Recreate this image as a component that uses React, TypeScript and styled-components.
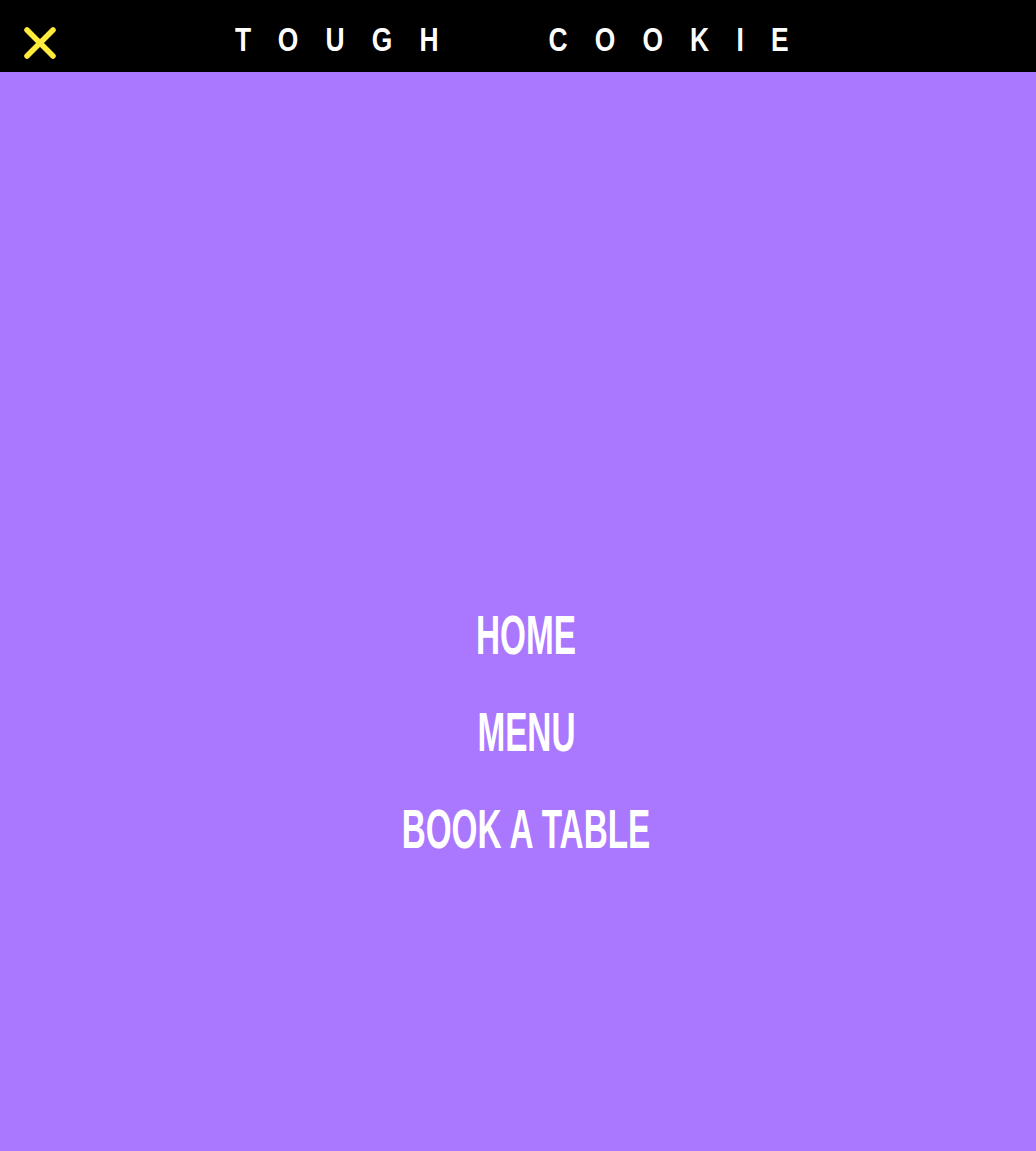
import styled, { createGlobalStyle } from "styled-components";

const PURPLE = "#aa77ff";
const YELLOW = "#ffeb3b";

const GlobalStyle = createGlobalStyle`
  html, body {
    margin: 0;
    padding: 0;
    background: ${PURPLE};
  }
  body {
    font-family: "Liberation Sans", Arial, sans-serif;
  }
`;

const Page = styled.div`
  min-height: 1151px;
  background: ${PURPLE};
  display: flex;
  flex-direction: column;
`;

const Header = styled.header`
  height: 72px;
  background: #000;
  display: flex;
  align-items: center;
  padding-left: 24px;
`;

const CloseButton = styled.button`
  flex: none;
  width: 32px;
  height: 32px;
  padding: 0;
  margin: 14px 0 0;
  border: none;
  background: none;
  cursor: pointer;
  display: flex;
  align-items: center;
  justify-content: center;

  svg {
    display: block;
  }
`;

const Title = styled.h1`
  margin: 7px 0 0 179px;
  color: #fff;
  font-size: 33px;
  font-weight: 700;
  letter-spacing: 34px;
  word-spacing: 60px;
  line-height: 1;
  white-space: nowrap;
  transform: scaleX(0.8);
  transform-origin: left center;
`;

const Nav = styled.nav`
  flex: 1;
  display: flex;
  flex-direction: column;
  align-items: center;
  padding-top: 514px;
  padding-left: 16px;
`;

const NavLink = styled.a`
  display: inline-block;
  color: #fff;
  text-decoration: none;
  font-size: 56px;
  font-weight: 700;
  line-height: 97px;
  transform: scaleX(0.595);
  cursor: pointer;
`;

const LINKS = ["HOME", "MENU", "BOOK A TABLE"];

function CloseIcon() {
  return (
    <svg width="32" height="32" viewBox="0 0 32 32">
      <path
        d="M3 3 L29 29 M29 3 L3 29"
        stroke={YELLOW}
        strokeWidth="5.5"
        strokeLinecap="round"
        fill="none"
      />
    </svg>
  );
}

export default function App() {
  return (
    <Page>
      <GlobalStyle />
      <Header>
        <CloseButton aria-label="Close menu">
          <CloseIcon />
        </CloseButton>
        <Title>TOUGH COOKIE</Title>
      </Header>
      <Nav>
        {LINKS.map((label) => (
          <NavLink key={label}>{label}</NavLink>
        ))}
      </Nav>
    </Page>
  );
}
